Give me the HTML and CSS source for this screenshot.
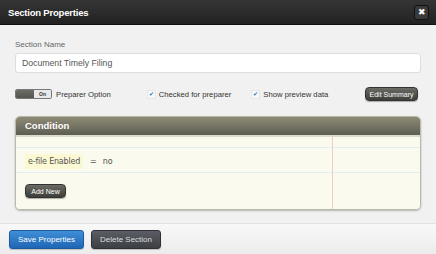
FILE: index.html
```html
<!DOCTYPE html>
<html lang="en">
<head>
    <meta charset="UTF-8">
    <meta name="viewport" content="width=device-width, initial-scale=1.0">
    <title>Section Properties</title>
    <link rel="stylesheet" href="styles.css">
</head>
<body>
    <div class="dialog">
        <div class="dialog-head">
            <h2>Section Properties</h2>
            <button class="close">&#10006;</button>
        </div>

        <div class="dialog-body">
            <label class="field-label" for="sectionName">Section Name</label>
            <input type="text" id="sectionName" value="Document Timely Filing">

            <div class="options">
                <div class="toggle"><span class="toggle-knob"></span><span class="toggle-on">On</span></div>
                <span class="opt-text">Preparer Option</span>
                <span class="check check-first">&#10004;</span>
                <span class="opt-text">Checked for preparer</span>
                <span class="check check-second">&#10004;</span>
                <span class="opt-text">Show preview data</span>
                <button class="btn-dark btn-summary">Edit Summary</button>
            </div>

            <div class="condition">
                <div class="condition-head">Condition</div>
                <div class="condition-body">
                    <div class="rule">
                        <span class="rule-field">e-file Enabled</span>
                        <span class="rule-op">=</span>
                        <span class="rule-value">no</span>
                    </div>
                    <button class="btn-dark btn-add">Add New</button>
                </div>
            </div>
        </div>

        <div class="dialog-foot">
            <button class="btn-save">Save Properties</button>
            <button class="btn-delete">Delete Section</button>
        </div>
    </div>
</body>
</html>
```

FILE: styles.css
```css
body {
    margin: 0;
    padding: 0;
    font-family: 'Liberation Sans', Arial, sans-serif;
    background-color: #f1f1f1;
    color: #444;
}
button {
    font-family: 'Liberation Sans', Arial, sans-serif;
    cursor: pointer;
}
.dialog {
    width: 436px;
    height: 254px;
    display: flex;
    flex-direction: column;
    overflow: hidden;
}

/* Header */
.dialog-head {
    height: 25px;
    flex: 0 0 25px;
    box-sizing: border-box;
    display: flex;
    align-items: center;
    justify-content: space-between;
    padding: 0 7px 0 8px;
    background: linear-gradient(#353535, #222);
    border-bottom: 1px solid #111;
}
.dialog-head h2 {
    margin: 0;
    color: #fff;
    font-size: 9.5px;
    font-weight: bold;
    letter-spacing: -0.2px;
}
.close {
    width: 15px;
    height: 15px;
    padding: 0;
    border: 1px solid #111;
    border-radius: 3px;
    background: #3a3a3a;
    color: #fff;
    font-size: 9px;
    line-height: 13px;
    text-align: center;
}

/* Body */
.dialog-body {
    flex: 0 0 199px;
    box-sizing: border-box;
    padding: 15px 15px 0 15px;
    background-color: #f1f1f1;
    border-bottom: 1px solid #e2e2e2;
}
.field-label {
    display: block;
    font-size: 8px;
    line-height: 10px;
    color: #666;
    margin-bottom: 3px;
}
input[type="text"] {
    display: block;
    width: 100%;
    height: 20px;
    box-sizing: border-box;
    padding: 0 6px;
    border: 1px solid #ddd;
    border-radius: 3px;
    background: #fff;
    font-family: 'Liberation Sans', Arial, sans-serif;
    font-size: 8.7px;
    color: #555;
}
.options {
    display: flex;
    align-items: center;
    height: 14px;
    margin-top: 14px;
    font-size: 7.7px;
    color: #333;
}
.toggle {
    display: flex;
    width: 37px;
    height: 10px;
    box-sizing: border-box;
    border: 1px solid #777;
    border-radius: 2px;
    overflow: hidden;
    margin-right: 4px;
}
.toggle-knob {
    flex: 0 0 18px;
    background: linear-gradient(#6d6d66, #55554f);
}
.toggle-on {
    flex: 1;
    background: #e8e8e8;
    font-size: 5px;
    font-weight: bold;
    line-height: 8px;
    text-align: center;
    color: #333;
}
.check {
    width: 7px;
    height: 7px;
    background: #f8f8f8;
    border: 1px solid #e6e6e6;
    color: #1d6fc4;
    font-size: 6px;
    line-height: 7px;
    text-align: center;
    margin-right: 3px;
}
.check-first {
    margin-left: 36px;
}
.check-second {
    margin-left: 20px;
}
.btn-dark {
    padding: 0;
    border: 1px solid #333;
    border-radius: 4px;
    background: linear-gradient(#6b6b64, #3e3e3a);
    color: #fff;
    font-size: 7px;
    box-shadow: 0 1px 1px rgba(0, 0, 0, 0.3);
}
.btn-summary {
    width: 53px;
    height: 14px;
    margin-left: auto;
    margin-right: 3px;
}

/* Condition panel */
.condition {
    margin-top: 15px;
    height: 94px;
    box-sizing: border-box;
    border: 1px solid #b9b9a9;
    border-radius: 5px;
    overflow: hidden;
    box-shadow: 0 1px 2px rgba(0, 0, 0, 0.25);
    background-color: #fafaee;
}
.condition-head {
    height: 20px;
    box-sizing: border-box;
    padding-left: 9px;
    background: linear-gradient(#8e8a75, #5e5d52);
    border-bottom: 2px solid #dcdccc;
    color: #fff;
    font-size: 9.5px;
    font-weight: bold;
    line-height: 18px;
}
.condition-body {
    height: 72px;
    padding: 17px 0 0 9px;
    box-sizing: border-box;
    background:
        linear-gradient(90deg, transparent 316px, #f2c9c4 316px, #f2c9c4 317px, transparent 317px),
        linear-gradient(transparent 10px, #e4ecf3 10px, #e4ecf3 11px, transparent 11px, transparent 35px, #e4ecf3 35px, #e4ecf3 36px, transparent 36px),
        #fafaee;
}
.rule {
    display: flex;
    align-items: center;
    height: 15px;
    font-family: 'DejaVu Sans', sans-serif;
    font-size: 8px;
    color: #555;
}
.rule-field {
    height: 15px;
    line-height: 15px;
    padding: 0 3px;
    background: #fbf9d4;
    letter-spacing: -0.2px;
}
.rule-op {
    margin-left: 7px;
}
.rule-value {
    margin-left: 6px;
}
.btn-add {
    display: block;
    width: 41px;
    height: 14px;
    margin-top: 15px;
}

/* Footer */
.dialog-foot {
    flex: 1;
    display: flex;
    align-items: flex-start;
    padding: 6px 0 0 9px;
    background: linear-gradient(#f8f8f8, #ececec);
}
.btn-save,
.btn-delete {
    height: 19px;
    padding: 0;
    border-radius: 3px;
    color: #fff;
    font-size: 8px;
    box-shadow: 0 1px 1px rgba(0, 0, 0, 0.2);
}
.btn-save {
    width: 75px;
    border: 1px solid #1c5a9e;
    background: linear-gradient(#3f8ed8, #1f66b5);
}
.btn-delete {
    width: 70px;
    margin-left: 7px;
    border: 1px solid #2e3034;
    background: linear-gradient(#5a5d63, #3c3f44);
    color: #ddd;
}
```
